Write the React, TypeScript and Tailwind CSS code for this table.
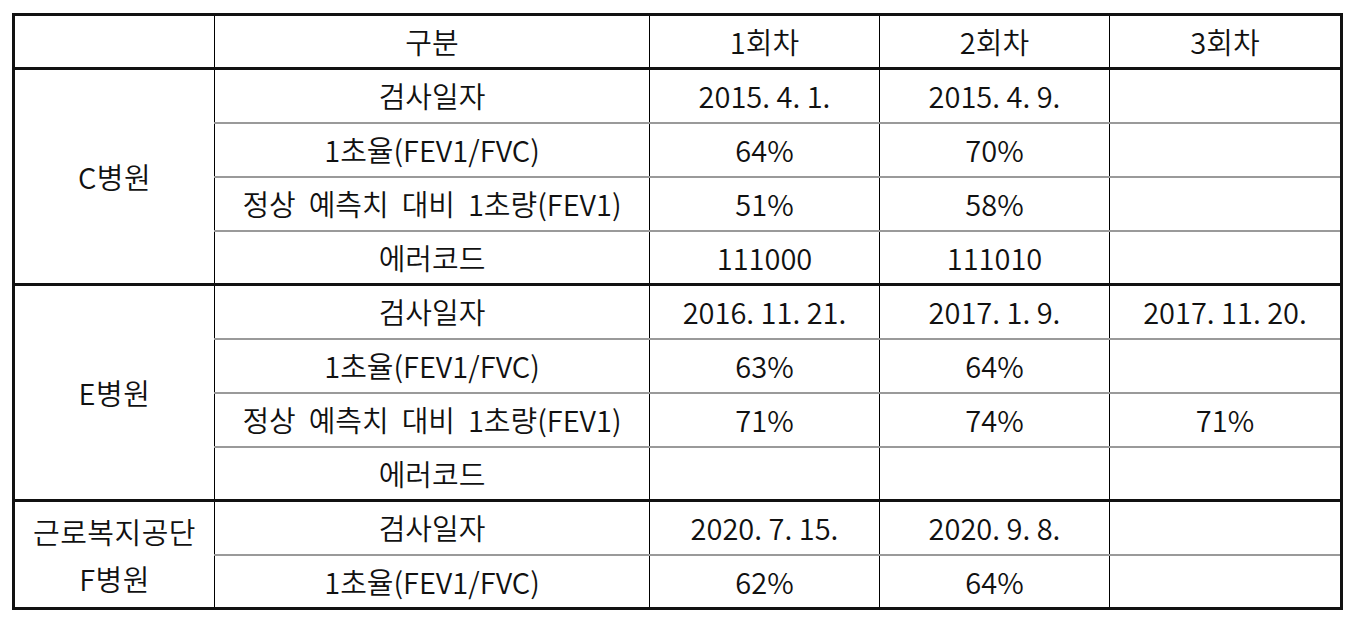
import React from "react";

type Row = {
  label: string;
  values: [string, string, string];
};

type Group = {
  name: string[];
  rows: Row[];
};

const groups: Group[] = [
  {
    name: ["C병원"],
    rows: [
      { label: "검사일자", values: ["2015. 4. 1.", "2015. 4. 9.", ""] },
      { label: "1초율(FEV1/FVC)", values: ["64%", "70%", ""] },
      { label: "정상  예측치  대비  1초량(FEV1)", values: ["51%", "58%", ""] },
      { label: "에러코드", values: ["111000", "111010", ""] },
    ],
  },
  {
    name: ["E병원"],
    rows: [
      { label: "검사일자", values: ["2016. 11. 21.", "2017. 1. 9.", "2017. 11. 20."] },
      { label: "1초율(FEV1/FVC)", values: ["63%", "64%", ""] },
      { label: "정상  예측치  대비  1초량(FEV1)", values: ["71%", "74%", "71%"] },
      { label: "에러코드", values: ["", "", ""] },
    ],
  },
  {
    name: ["근로복지공단", "F병원"],
    rows: [
      { label: "검사일자", values: ["2020. 7. 15.", "2020. 9. 8.", ""] },
      { label: "1초율(FEV1/FVC)", values: ["62%", "64%", ""] },
    ],
  },
];

const cell =
  "h-[54px] p-0 text-center align-middle border-x border-y-2 border-x-black border-y-[#9a9a9a] whitespace-pre leading-none";

export default function App() {
  return (
    <div className="min-h-[620px] w-[1353px] bg-white pt-[13px] pl-[12px] font-['Noto_Sans_CJK_KR','Noto_Sans',sans-serif] font-[350] text-[29px] text-[#111]">
      <table className="table-fixed border-collapse border-[3px] border-[#111] w-[1328px]">
        <colgroup>
          <col className="w-[201px]" />
          <col className="w-[435px]" />
          <col className="w-[230px]" />
          <col className="w-[230px]" />
          <col className="w-[232px]" />
        </colgroup>
        <thead>
          <tr>
            <th className={`${cell} font-[350]`}></th>
            <th className={`${cell} font-[350]`}>구분</th>
            <th className={`${cell} font-[350]`}>1회차</th>
            <th className={`${cell} font-[350]`}>2회차</th>
            <th className={`${cell} font-[350]`}>3회차</th>
          </tr>
        </thead>
        <tbody>
          {groups.map((g) =>
            g.rows.map((r, i) => {
              const top = i === 0 ? "border-t-[3px] border-t-[#111]" : "";
              return (
                <tr key={g.name.join("") + i}>
                  {i === 0 && (
                    <td
                      rowSpan={g.rows.length}
                      className={`${cell} ${top} border-b-[3px] border-b-[#111] !leading-[47px] tracking-[0.5px]`}
                    >
                      {g.name.map((n) => (
                        <div key={n}>{n}</div>
                      ))}
                    </td>
                  )}
                  <td className={`${cell} ${top}`}>{r.label}</td>
                  {r.values.map((v, j) => (
                    <td key={j} className={`${cell} ${top}`}>
                      {v}
                    </td>
                  ))}
                </tr>
              );
            })
          )}
        </tbody>
      </table>
    </div>
  );
}
